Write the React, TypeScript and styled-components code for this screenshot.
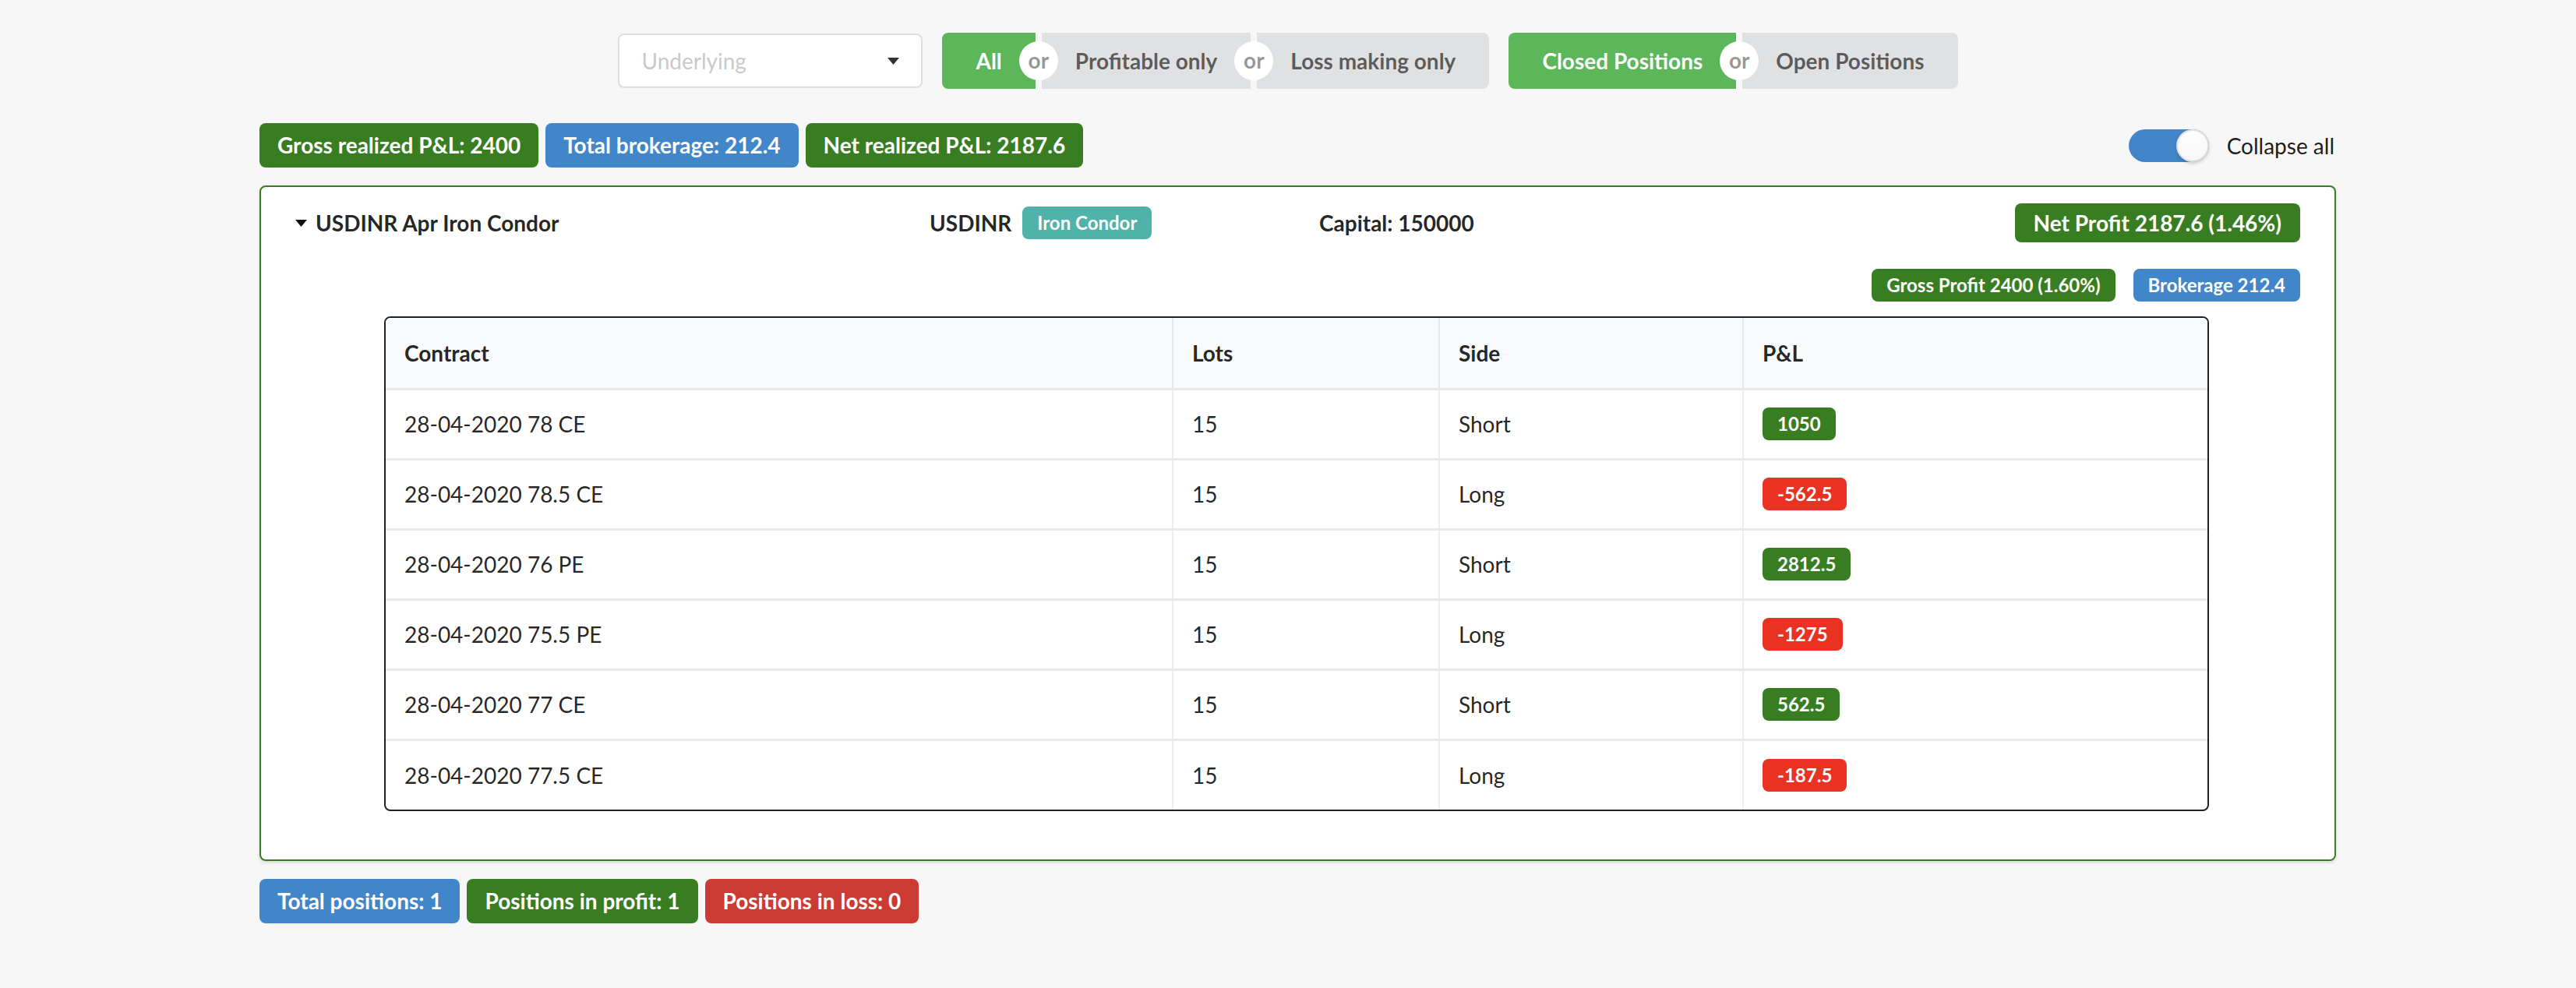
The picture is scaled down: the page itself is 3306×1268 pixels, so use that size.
import React from "react";
import styled, { createGlobalStyle, css } from "styled-components";

const GlobalStyle = createGlobalStyle`
  html, body {
    margin: 0;
    padding: 0;
    background: #f7f7f7;
    font-family: Lato, "Open Sans", "Liberation Sans", sans-serif;
    color: rgba(0, 0, 0, 0.87);
  }
  * { box-sizing: border-box; }
`;

const COLORS = {
  green: "#397d22",
  blue: "#4286ca",
  red: "#cb3b34",
  brightRed: "#ea3223",
  teal: "#51b2aa",
  btnGreen: "#5bb75a",
  btnGray: "#e0e1e2",
};

type Tone = keyof typeof COLORS;

const Page = styled.div`
  padding-top: 42px;
  padding-bottom: 60px;
`;

const FilterRow = styled.div`
  display: flex;
  justify-content: center;
  align-items: center;
  gap: 25px;
`;

const Dropdown = styled.div`
  width: 391px;
  height: 70px;
  background: #fff;
  border: 2px solid rgba(34, 36, 38, 0.15);
  border-radius: 8px;
  display: flex;
  align-items: center;
  justify-content: space-between;
  padding: 0 28px 0 28px;
  font-size: 28px;
  color: rgba(191, 191, 191, 0.87);
`;

const ButtonGroup = styled.div`
  display: flex;
  height: 72px;
`;

const ToggleButton = styled.div<{ $active?: boolean; $first?: boolean; $last?: boolean }>`
  display: flex;
  align-items: center;
  padding: 0 43px;
  font-size: 28px;
  font-weight: 700;
  background: ${(p) => (p.$active ? COLORS.btnGreen : COLORS.btnGray)};
  color: ${(p) => (p.$active ? "#fff" : "rgba(0,0,0,0.6)")};
  border-radius: ${(p) =>
    p.$first ? "8px 0 0 8px" : p.$last ? "0 8px 8px 0" : "0"};
`;

const Or = styled.div`
  position: relative;
  width: 8px;
  z-index: 2;
  &::before {
    content: "or";
    position: absolute;
    top: 50%;
    left: 50%;
    transform: translate(-50%, -50%);
    width: 50px;
    height: 50px;
    border-radius: 50%;
    background: #fff;
    color: rgba(0, 0, 0, 0.42);
    font-size: 28px;
    font-weight: 700;
    line-height: 48px;
    text-align: center;
  }
`;

const Container = styled.div`
  width: 2665px;
  margin-left: 333px;
`;

const StatsRow = styled.div`
  margin-top: 44px;
  display: flex;
  justify-content: space-between;
  align-items: center;
`;

const LabelGroup = styled.div`
  display: flex;
  gap: 9px;
  align-items: center;
`;

const Label = styled.span<{ $tone: Tone; $size?: "big" | "net" | "small" }>`
  display: inline-flex;
  align-items: center;
  background: ${(p) => COLORS[p.$tone]};
  color: #fff;
  font-weight: 700;
  line-height: 1;
  border-radius: 8px;
  white-space: nowrap;
  ${(p) =>
    p.$size === "small"
      ? css`
          font-size: 24px;
          padding: 9px 19px;
        `
      : p.$size === "net"
      ? css`
          font-size: 28px;
          padding: 11px 24px;
        `
      : css`
          font-size: 28px;
          padding: 14px 23px 15px;
        `}
`;

const ToggleWrap = styled.div`
  display: flex;
  align-items: center;
  gap: 23px;
  padding-right: 2px;
`;

const Track = styled.div`
  position: relative;
  width: 103px;
  height: 42px;
  border-radius: 21px;
  background: #4286ca;
`;

const Knob = styled.div`
  position: absolute;
  top: 0;
  right: 0;
  width: 42px;
  height: 42px;
  border-radius: 50%;
  background: linear-gradient(#fff, #f6f6f6);
  box-shadow: 0 2px 4px 0 rgba(34, 36, 38, 0.2), 0 0 0 2px rgba(34, 36, 38, 0.12) inset;
`;

const ToggleText = styled.span`
  font-size: 28px;
  color: rgba(0, 0, 0, 0.9);
`;

const Card = styled.div`
  margin-top: 23px;
  background: #fff;
  border: 2px solid #397d22;
  border-radius: 8px;
  box-shadow: 0 2px 4px 0 rgba(34, 36, 38, 0.15);
  padding: 21px 44px 62px 44px;
`;

const TitleRow = styled.div`
  display: grid;
  grid-template-columns: 814px 500px 1fr auto;
  align-items: center;
  font-size: 28px;
  font-weight: 700;
`;

const TitleCell = styled.div`
  display: flex;
  align-items: center;
  gap: 11px;
`;

const Inline = styled.div`
  display: flex;
  align-items: center;
  gap: 14px;
`;

const SubRow = styled.div`
  display: flex;
  justify-content: flex-end;
  gap: 23px;
  margin-top: 34px;
`;

const TableWrap = styled.div`
  margin: 19px 117px 0 114px;
  border: 2px solid #222;
  border-radius: 8px;
  overflow: hidden;
`;

const Table = styled.table`
  width: 100%;
  border-collapse: collapse;
  font-size: 28px;
  table-layout: fixed;
`;

const Th = styled.th`
  text-align: left;
  font-weight: 700;
  background: #f9fafb;
  height: 91px;
  padding: 0 24px;
  border-left: 2px solid rgba(34, 36, 38, 0.08);
  border-bottom: 3px solid rgba(34, 36, 38, 0.1);
  &:first-child { border-left: none; }
`;

const Td = styled.td`
  height: 90px;
  padding: 0 24px;
  border-left: 2px solid rgba(34, 36, 38, 0.08);
  border-top: 3px solid rgba(34, 36, 38, 0.1);
  &:first-child { border-left: none; }
`;

const Tr = styled.tr`
  &:first-child td { border-top: none; }
`;

const Footer = styled.div`
  margin-top: 23px;
  display: flex;
  gap: 9px;
`;

const Caret = ({ size = 16, color = "#222" }: { size?: number; color?: string }) => (
  <svg width={size} height={size * 0.6} viewBox="0 0 10 6" style={{ display: "block" }}>
    <path d="M0 0 L10 0 L5 6 Z" fill={color} />
  </svg>
);

const rows = [
  { c: "28-04-2020 78 CE", l: 15, s: "Short", p: "1050" },
  { c: "28-04-2020 78.5 CE", l: 15, s: "Long", p: "-562.5" },
  { c: "28-04-2020 76 PE", l: 15, s: "Short", p: "2812.5" },
  { c: "28-04-2020 75.5 PE", l: 15, s: "Long", p: "-1275" },
  { c: "28-04-2020 77 CE", l: 15, s: "Short", p: "562.5" },
  { c: "28-04-2020 77.5 CE", l: 15, s: "Long", p: "-187.5" },
];

export default function App() {
  return (
    <Page>
      <GlobalStyle />
      <FilterRow>
        <Dropdown>
          <span>Underlying</span>
          <Caret size={15} color="#333" />
        </Dropdown>
        <ButtonGroup>
          <ToggleButton $active $first>All</ToggleButton>
          <Or />
          <ToggleButton>Profitable only</ToggleButton>
          <Or />
          <ToggleButton $last>Loss making only</ToggleButton>
        </ButtonGroup>
        <ButtonGroup>
          <ToggleButton $active $first>Closed Positions</ToggleButton>
          <Or />
          <ToggleButton $last>Open Positions</ToggleButton>
        </ButtonGroup>
      </FilterRow>
      <Container>
        <StatsRow>
          <LabelGroup>
            <Label $tone="green">Gross realized P&amp;L: 2400</Label>
            <Label $tone="blue">Total brokerage: 212.4</Label>
            <Label $tone="green">Net realized P&amp;L: 2187.6</Label>
          </LabelGroup>
          <ToggleWrap>
            <Track>
              <Knob />
            </Track>
            <ToggleText>Collapse all</ToggleText>
          </ToggleWrap>
        </StatsRow>
        <Card>
          <TitleRow>
            <TitleCell>
              <Caret size={15} color="#111" />
              <span>USDINR Apr Iron Condor</span>
            </TitleCell>
            <Inline>
              <span>USDINR</span>
              <Label $tone="teal" $size="small">Iron Condor</Label>
            </Inline>
            <div>Capital: 150000</div>
            <Label $tone="green" $size="net">Net Profit 2187.6 (1.46%)</Label>
          </TitleRow>
          <SubRow>
            <Label $tone="green" $size="small">Gross Profit 2400 (1.60%)</Label>
            <Label $tone="blue" $size="small">Brokerage 212.4</Label>
          </SubRow>
          <TableWrap>
            <Table>
              <colgroup>
                <col style={{ width: 1010 }} />
                <col style={{ width: 342 }} />
                <col style={{ width: 390 }} />
                <col />
              </colgroup>
              <thead>
                <tr>
                  <Th>Contract</Th>
                  <Th>Lots</Th>
                  <Th>Side</Th>
                  <Th>P&amp;L</Th>
                </tr>
              </thead>
              <tbody>
                {rows.map((r) => (
                  <Tr key={r.c}>
                    <Td>{r.c}</Td>
                    <Td>{r.l}</Td>
                    <Td>{r.s}</Td>
                    <Td>
                      <Label $tone={r.p.startsWith("-") ? "brightRed" : "green"} $size="small">
                        {r.p}
                      </Label>
                    </Td>
                  </Tr>
                ))}
              </tbody>
            </Table>
          </TableWrap>
        </Card>
        <Footer>
          <Label $tone="blue">Total positions: 1</Label>
          <Label $tone="green">Positions in profit: 1</Label>
          <Label $tone="red">Positions in loss: 0</Label>
        </Footer>
      </Container>
    </Page>
  );
}
